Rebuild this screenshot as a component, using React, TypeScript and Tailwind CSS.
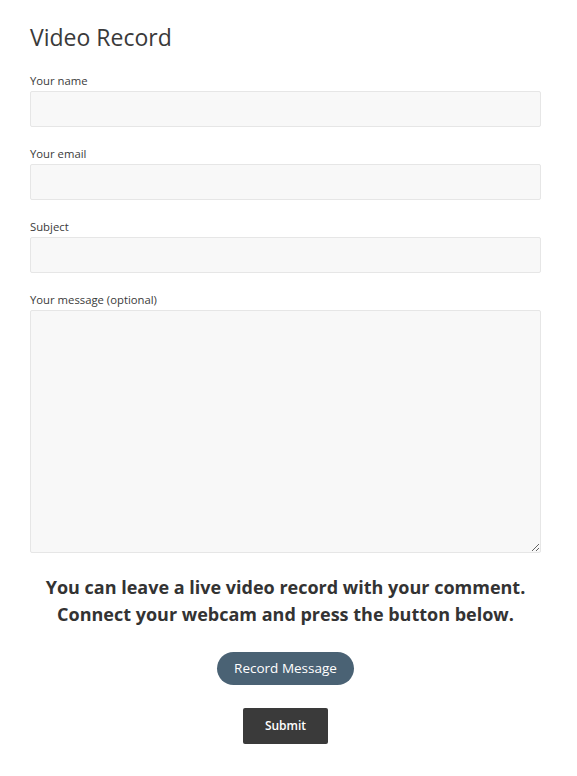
export default function App() {
  const fields = [
    { label: "Your name", type: "text" },
    { label: "Your email", type: "email" },
    { label: "Subject", type: "text" },
  ];

  return (
    <div className="min-h-screen bg-white font-['Open_Sans',sans-serif] text-[#333]">
      <div className="pl-[30px] pr-[36px] pt-[22px]">
        <h1 className="text-[23px] leading-[30px] font-normal text-[#3a3a3a]">Video Record</h1>

        <form className="mt-[21px]" onSubmit={(e) => e.preventDefault()}>
          {fields.map((f) => (
            <div key={f.label} className="mb-[19px]">
              <label className="block text-[11.3px] leading-[16px] text-[#3a3a3a] mb-[2px]">{f.label}</label>
              <input
                type={f.type}
                className="block w-full h-[36px] bg-[#f8f8f8] border border-[#e6e6e6] rounded-[2px] px-3 text-sm outline-none"
              />
            </div>
          ))}

          <div>
            <label className="block text-[11.3px] leading-[16px] text-[#3a3a3a] mb-[2px]">Your message (optional)</label>
            <textarea className="block w-full h-[243px] bg-[#f8f8f8] border border-[#e6e6e6] rounded-[2px] px-3 py-2 text-sm outline-none resize-y" />
          </div>

          {/* video record block */}
          <div className="mt-[21px] text-center">
            <p className="text-[18px] leading-[27px] font-bold text-[#333]">
              You can leave a live video record with your comment.
              <br />
              Connect your webcam and press the button below.
            </p>
            <button
              type="button"
              className="mt-[24px] h-[33px] px-[17px] rounded-full bg-[#4a6274] text-white text-[13.5px]"
            >
              Record Message
            </button>
          </div>

          <div className="mt-[23px] text-center">
            <button
              type="submit"
              className="h-[36px] w-[85px] rounded-[2px] bg-[#3a3a3a] text-white text-[12px] font-semibold"
            >
              Submit
            </button>
          </div>
        </form>
      </div>
    </div>
  );
}
